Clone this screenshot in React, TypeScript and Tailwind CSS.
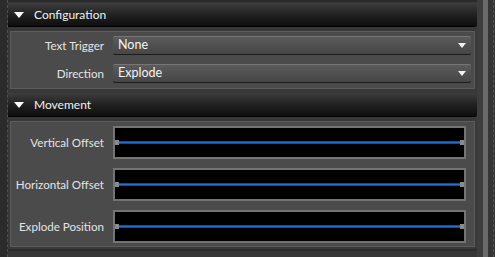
import React from 'react';

const FONT = { fontFamily: 'Lato, "Noto Sans", "Liberation Sans", sans-serif' };

function SectionHeader({ title }: { title: string }) {
  return (
    <div className="h-[24px] flex items-center rounded-r-[3px] bg-gradient-to-b from-[#3d3d3d] via-[#222] to-[#0e0e0e] border-b border-[#000]">
      <span className="ml-[6px] w-0 h-0 border-l-[5px] border-r-[5px] border-t-[6px] border-l-transparent border-r-transparent border-t-white" />
      <span className="ml-[10px] pt-[1px] text-[12px] text-[#f2f2f2] leading-none whitespace-nowrap">{title}</span>
    </div>
  );
}

function Combo({ label, value }: { label: string; value: string }) {
  return (
    <div className="flex items-center h-[19px]">
      <div className="w-[93px] text-right text-[11.6px] text-[#e4e4e4] leading-none whitespace-nowrap">{label}</div>
      <div className="ml-[9px] flex-1 h-[19px] flex items-center rounded-[2px] border-t border-[#767676] border-b border-b-[#1c1c1c] bg-gradient-to-b from-[#5b5b5b] to-[#464646]">
        <span className="ml-[5px] text-[12.5px] text-[#f4f4f4] leading-none whitespace-nowrap">{value}</span>
        <span className="ml-auto mr-[5px] w-0 h-0 border-l-[4px] border-r-[4px] border-t-[5px] border-l-transparent border-r-transparent border-t-[#f2f2f2]" />
      </div>
    </div>
  );
}

function Slider({ label }: { label: string }) {
  return (
    <div className="flex items-center h-[33px]">
      <div className="w-[93px] text-right text-[11.6px] text-[#e4e4e4] leading-none whitespace-nowrap">{label}</div>
      <div className="ml-[9px] flex-1 h-[33px] bg-black border-2 border-[#747474] flex items-center">
        <span className="w-[4px] h-[5px] bg-[#8a8a8a]" />
        <div className="flex-1 h-[3px] bg-[#2270dc] border-y border-[#154a95]" />
        <span className="w-[4px] h-[5px] bg-[#8a8a8a]" />
      </div>
    </div>
  );
}

export default function App() {
  return (
    <div className="w-[495px] h-[257px] flex overflow-hidden bg-[#333]" style={FONT}>
      {/* left gutter */}
      <div className="w-[8px] bg-[#2b2b2b] border-r border-dashed border-[#505050]" />

      {/* content */}
      <div className="w-[469px] flex flex-col pt-[1px] bg-[#383838] border-t-2 border-[#2a2a2a]">
        <SectionHeader title="Configuration" />
        <div className="mt-[4px] mx-[2px] h-[58px] bg-[#4b4b4b] border border-[#5c5c5c] pt-[4px] pr-[3px] flex flex-col gap-[9px]">
          <Combo label="Text Trigger" value="None" />
          <Combo label="Direction" value="Explode" />
        </div>

        <div className="mt-[4px]">
          <SectionHeader title="Movement" />
        </div>
        <div className="mt-[4px] mx-[2px] h-[126px] bg-[#4b4b4b] border border-[#5c5c5c] pt-[4px] pr-[8px] flex flex-col gap-[9px]">
          <Slider label="Vertical Offset" />
          <Slider label="Horizontal Offset" />
          <Slider label="Explode Position" />
        </div>

        <div className="mt-[2px] h-[2px] bg-[#2c2c2c]" />
        <div className="flex-1 bg-[#363636]" />
      </div>

      {/* right scroll gutter */}
      <div className="w-[6px] bg-[#3d3d3d]" />
      <div className="w-[5px] bg-[#6a6a6a]" />
      <div className="w-[7px] bg-[#353535] flex justify-end pr-[1px]">
        <div className="h-full border-r border-dashed border-[#555]" />
      </div>
    </div>
  );
}
